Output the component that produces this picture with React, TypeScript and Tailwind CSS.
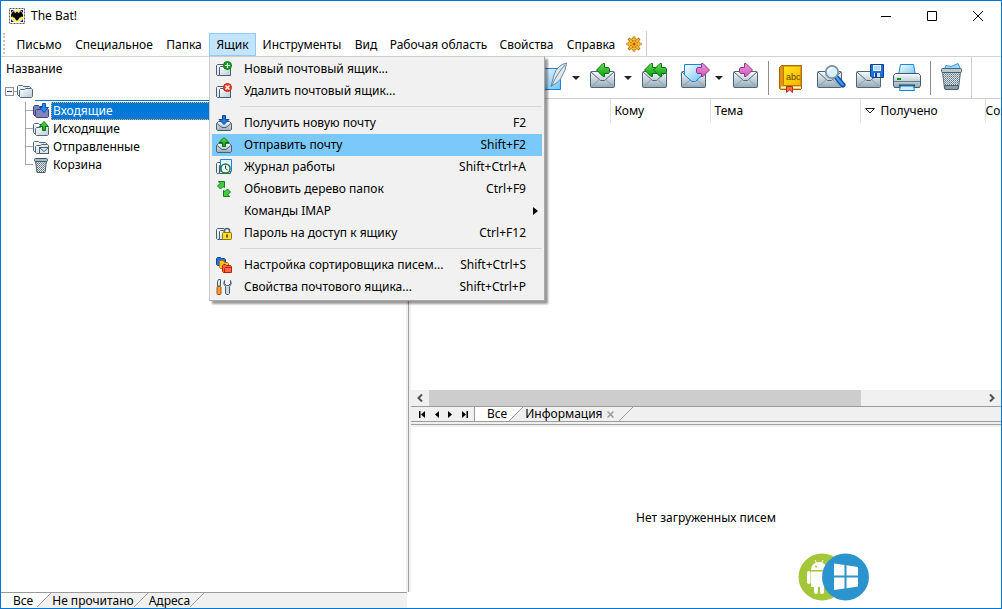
import type { ReactNode } from 'react';

const menus = [
  { label: 'Письмо', width: 'w-[60px]' },
  { label: 'Специальное', width: 'w-[90px]' },
  { label: 'Папка', width: 'w-[50px]' },
  { label: 'Ящик', width: 'w-[47px]', open: true },
  { label: 'Инструменты', width: 'w-[92px]' },
  { label: 'Вид', width: 'w-[36px]' },
  { label: 'Рабочая область', width: 'w-[109px]' },
  { label: 'Свойства', width: 'w-[67px]' },
  { label: 'Справка', width: 'w-[62px]' },
];

/* Gradients shared by every icon */
const Defs = () => (
  <svg width="0" height="0" className="absolute" aria-hidden="true">
    <defs>
      <linearGradient id="steel" x1="0" y1="0" x2="0" y2="1">
        <stop offset="0" stopColor="#f8fbfd" />
        <stop offset="1" stopColor="#94a9b7" />
      </linearGradient>
      <linearGradient id="paper" x1="0" y1="0" x2="1" y2="1">
        <stop offset="0" stopColor="#ffffff" />
        <stop offset="1" stopColor="#b9cad6" />
      </linearGradient>
      <linearGradient id="green" x1="0" y1="0" x2="0" y2="1">
        <stop offset="0" stopColor="#5fe04e" />
        <stop offset="1" stopColor="#0f9a17" />
      </linearGradient>
      <linearGradient id="pink" x1="0" y1="0" x2="0" y2="1">
        <stop offset="0" stopColor="#f08fdc" />
        <stop offset="1" stopColor="#c95fba" />
      </linearGradient>
      <linearGradient id="sky" x1="0" y1="0" x2="1" y2="1">
        <stop offset="0" stopColor="#ffffff" />
        <stop offset="1" stopColor="#6cc3fa" />
      </linearGradient>
      <linearGradient id="gold" x1="0" y1="0" x2="1" y2="1">
        <stop offset="0" stopColor="#ffe81c" />
        <stop offset="1" stopColor="#f5b400" />
      </linearGradient>
      <pattern id="mesh" width="2" height="2" patternUnits="userSpaceOnUse">
        <rect width="2" height="2" fill="#dfe6ea" />
        <rect width="1" height="1" fill="#5d6f7b" />
        <rect x="1" y="1" width="1" height="1" fill="#8496a1" />
      </pattern>
    </defs>
  </svg>
);

const Icon16 = ({ children }: { children?: ReactNode }) => (
  <svg width="16" height="16" viewBox="0 0 16 16" className="shrink-0" aria-hidden="true">
    {children}
  </svg>
);

const Icon32 = ({ children }: { children: ReactNode }) => (
  <svg width="32" height="32" viewBox="0 0 32 32" className="shrink-0" aria-hidden="true">
    {children}
  </svg>
);

const FolderShape = ({ fill = 'url(#paper)', stroke = '#4f6a7a' }: { fill?: string; stroke?: string }) => (
  <g fill={fill} stroke={stroke} strokeLinejoin="round">
    <path d="M2.5 13.5 L0.5 11.5 V3.5 L1.5 2.5 H5.5 L6.5 3.5 H12.5 L13.5 4.5 V6" />
    <path d="M2.5 13.5 V7.5 L3.5 6.5 H7.5 L8.5 5.5 H14.5 L15.5 6.5 V13.5 L14.5 14.5 H3.5 Z" />
  </g>
);

const FolderIcon = () => (
  <Icon16>
    <FolderShape />
  </Icon16>
);

const BoxShape = () => (
  <g fill="url(#paper)" stroke="#46606f" strokeLinejoin="round">
    <path d="M3.5 14.5 H1.5 L0.5 13.5 V4.5 L1.5 3.5 H8" />
    <path d="M3.5 14.5 V6.5 L4.5 5.5 H7.5 L8.5 7.5 H14.5 V14.5 Z" />
  </g>
);

const SmallEnvelope = () => (
  <g stroke="#46606f" strokeLinejoin="round">
    <path d="M2.5 6.5 H13.5 L15.5 8.5 V14.5 L14.5 15.5 H1.5 L0.5 14.5 V8.5 Z" fill="url(#steel)" />
    <path d="M1 8.5 L6 12.5 H10 L15 8.5" fill="none" />
  </g>
);

const NewBoxIcon = () => (
  <Icon16>
    <BoxShape />
    <circle cx="11.5" cy="4.5" r="4" fill="#19a825" stroke="#087a12" />
    <path d="M9 4.5 H14 M11.5 2 V7" stroke="#fff" />
  </Icon16>
);

const DeleteBoxIcon = () => (
  <Icon16>
    <BoxShape />
    <circle cx="11.5" cy="4.5" r="4" fill="#f0452a" stroke="#c21e0c" />
    <path d="M9.5 2.5 L13.5 6.5 M13.5 2.5 L9.5 6.5" stroke="#fff" strokeWidth="1.3" />
  </Icon16>
);

const ReceiveIcon = () => (
  <Icon16>
    <SmallEnvelope />
    <path d="M6.5 0.5 H9.5 V4.5 H13 L8 9.5 L3 4.5 H6.5 Z" fill="#2478df" stroke="#0b3f9c" />
  </Icon16>
);

const SendIcon = () => (
  <Icon16>
    <SmallEnvelope />
    <path d="M8 0.5 L13 5.5 H9.5 V9.5 H6.5 V5.5 H3 Z" fill="url(#green)" stroke="#087312" />
  </Icon16>
);

const LogIcon = () => (
  <Icon16>
    <BoxShape />
    <path d="M4.5 0.5 H15.5 V12.5 H4.5 Z" fill="#e6f5fe" stroke="#1686df" />
    <circle cx="9.5" cy="9.5" r="4.6" fill="#effbea" stroke="#247a45" strokeWidth="1.5" />
    <path d="M9.5 6.5 V9.5 L11.5 11" fill="none" stroke="#193c4c" />
  </Icon16>
);

const RefreshIcon = () => (
  <Icon16>
    <g fill="#3fcf3a" stroke="#0a8216" strokeLinejoin="round">
      <path d="M2.5 0.5 H8.5 V6.5 L7 5.5 L4.5 8 L1.5 5 L4 2.5 Z" />
      <path d="M13.5 15.5 H7.5 V9.5 L9 10.5 L11.5 8 L14.5 11 L12 13.5 Z" />
    </g>
  </Icon16>
);

const PasswordIcon = () => (
  <Icon16>
    <BoxShape />
    <path d="M8.5 9 V6 Q8.5 3.5 11 3.5 Q13.5 3.5 13.5 6 V9" fill="none" stroke="#546a76" strokeWidth="1.6" />
    <rect x="6.5" y="7.5" width="9" height="7" rx="1" fill="#ffe02a" stroke="#8a7312" />
    <path d="M11 9.5 V12.5" stroke="#5b4800" strokeWidth="1.8" />
  </Icon16>
);

const SorterIcon = () => (
  <Icon16>
    <g strokeLinejoin="round">
      <path d="M1.5 8.5 L0.5 7.5 V1.5 L1.5 0.5 H4.5 L5.5 1.5 H8.5 L9.5 2.5 V8.5 Z" fill="#1e74d4" stroke="#0c4598" />
      <path d="M4.5 11.5 L3.5 10.5 V4.5 L4.5 3.5 H7.5 L8.5 5.5 H11.5 L12.5 6.5 V11.5 Z" fill="#ffc21c" stroke="#b57400" />
      <path d="M7.5 15.5 L6.5 14.5 V8.5 L7.5 7.5 H9.5 L10.5 8.5 H14.5 L15.5 9.5 V15.5 Z" fill="#ff6742" stroke="#b91e08" />
      <path d="M8.5 15 V11.5 L9.5 10.5 H15" fill="none" stroke="#b91e08" />
    </g>
  </Icon16>
);

const ToolsIcon = () => (
  <Icon16>
    <path d="M1.5 2.5 L2.5 0.5 H4.5 V7 H1.5 Z" fill="#dce6ec" stroke="#415d6d" />
    <rect x="1" y="7.5" width="4" height="8" rx="1" fill="#f59a3a" stroke="#a9570f" />
    <path
      d="M8.5 1.5 V4.5 L10.5 6.5 H12.5 L14.5 4.5 V1.5 Q16.5 5 13.5 7.5 V14.5 L12.5 15.5 H11 L9.5 14.5 V7.5 Q6.5 5 8.5 1.5 Z"
      fill="#c9d9e2"
      stroke="#415d6d"
    />
  </Icon16>
);

const InboxIcon = () => (
  <Icon16>
    <FolderShape fill="#8086bd" stroke="#3d4283" />
    <path d="M9.5 0.5 H12.5 V4.5 H15.5 L11 9.5 L6.5 4.5 H9.5 Z" fill="#2b8df0" stroke="#0b4bb0" />
  </Icon16>
);

const OutboxIcon = () => (
  <Icon16>
    <FolderShape />
    <path d="M11 0.5 L15.5 5.5 H12.5 V9.5 H9.5 V5.5 H6.5 Z" fill="url(#green)" stroke="#087312" />
  </Icon16>
);

const SentIcon = () => (
  <Icon16>
    <FolderShape />
    <rect x="6.5" y="8.5" width="9" height="6" fill="#dfe8ee" stroke="#46606f" />
    <path d="M7 9 L11 12.5 L15 9" fill="none" stroke="#46606f" />
  </Icon16>
);

const BinIcon = () => (
  <Icon16>
    <path d="M2.5 4 H13.5 L12 15.5 H4 Z" fill="url(#mesh)" stroke="#4c616e" />
    <rect x="1.5" y="1.5" width="13" height="3" rx="1" fill="#a9bac5" stroke="#3f5664" />
  </Icon16>
);

/* Toolbar pictures */
const Envelope = () => (
  <g stroke="#4d6676" strokeLinejoin="round">
    <rect x="3.5" y="9.5" width="24" height="16" rx="1" fill="url(#steel)" />
    <path d="M4 10 L13.5 18.5 H17.5 L27 10" fill="none" />
    <path d="M4 25 L12.5 17.5 M27 25 L18.5 17.5" fill="none" stroke="#8aa0ae" />
  </g>
);

const ComposeIcon = () => (
  <Icon32>
    <path d="M1.5 6.5 H25.5 V27.5 H1.5 Z" fill="url(#sky)" stroke="#0f84e2" />
    <path d="M31.5 1 Q22 3 19 13 L16 24 Q25 20 27 14 Q31 8 31.5 1 Z" fill="#dde8ef" stroke="#6e8798" />
    <path d="M30 3 Q23 10 16 25" fill="none" stroke="#6e8798" />
  </Icon32>
);

const ReplyIcon = () => (
  <Icon32>
    <Envelope />
    <path d="M9.5 8 L16 1.5 H17.5 V5.5 H21.5 L22.5 7 V10 L21.5 11.5 H17.5 V14.5 H16 Z" fill="url(#green)" stroke="#087312" />
  </Icon32>
);

const ReplyAllIcon = () => (
  <Icon32>
    <Envelope />
    <g fill="url(#green)" stroke="#087312">
      <path d="M5.5 8 L12 1.5 H13.5 V5.5 H18 V11.5 H13.5 V14.5 H12 Z" />
      <path d="M14.5 8 L21 1.5 H22.5 V5.5 H26.5 L27.5 7 V10 L26.5 11.5 H22.5 V14.5 H21 Z" />
    </g>
  </Icon32>
);

const ForwardIcon = () => (
  <Icon32>
    <Envelope />
    <path d="M6.5 2.5 H24.5 V13 L17.5 19.5 H14 L6.5 13 Z" fill="url(#sky)" stroke="#0f84e2" />
    <path d="M31.5 8 L25 1.5 H23.5 V5.5 H19.5 L18.5 7 V10 L19.5 11.5 H23.5 V14.5 H25 Z" fill="url(#pink)" stroke="#913586" />
  </Icon32>
);

const RedirectIcon = () => (
  <Icon32>
    <Envelope />
    <path d="M22.5 8 L16 1.5 H14.5 V5.5 H10.5 L9.5 7 V10 L10.5 11.5 H14.5 V14.5 H16 Z" fill="url(#pink)" stroke="#913586" />
  </Icon32>
);

const BookIcon = () => (
  <Icon32>
    <path d="M4.5 5.5 L6.5 3.5 H26.5 V26.5 L25.5 27.5 H5.5 L4.5 26.5 Z" fill="#e3960c" stroke="#a95e00" />
    <path d="M8.5 4 H26 V23.5 H8.5 Z" fill="url(#gold)" stroke="#bd7900" />
    <path d="M6 24.5 H26 V26.5 H6 Z" fill="#fff3c9" />
    <path d="M11.5 24.5 H17.5 V30.5 L14.5 28 L11.5 30.5 Z" fill="#f06a50" stroke="#bf2d18" />
    <text x="11" y="18" fontSize="9" fill="#6b4300" fontFamily="Liberation Sans, sans-serif">abc</text>
  </Icon32>
);

const SearchIcon = () => (
  <Icon32>
    <Envelope />
    <path d="M23 16 L29 23" stroke="#124da3" strokeWidth="5" strokeLinecap="round" />
    <path d="M23 16 L28.5 22.5" stroke="#3f9af0" strokeWidth="2.5" strokeLinecap="round" />
    <circle cx="18" cy="10" r="6.2" fill="#d8effc" stroke="#7b93a3" strokeWidth="1.8" />
    <path d="M14 10 Q14.5 6 18.5 6" fill="none" stroke="#fff" strokeWidth="1.5" />
  </Icon32>
);

const SaveIcon = () => (
  <Icon32>
    <Envelope />
    <path d="M17.5 2.5 H30.5 V15.5 H19 L17.5 14 Z" fill="#1f6fd6" stroke="#0b3f94" />
    <rect x="20" y="3" width="8" height="6" fill="#e3f3fe" />
    <path d="M21 5 H27 M21 7 H27" stroke="#88bdea" />
    <rect x="21" y="11" width="6" height="4" fill="#cfe2f5" />
    <rect x="22" y="11" width="2" height="4" fill="#0b3f94" />
  </Icon32>
);

const PrintIcon = () => (
  <Icon32>
    <path d="M8.5 2.5 H21.5 L23.5 13 H6.5 Z" fill="url(#sky)" stroke="#1686df" />
    <path d="M3.5 11.5 H26.5 L28.5 13.5 V23.5 L27.5 25.5 H2.5 L1.5 23.5 V13.5 Z" fill="url(#steel)" stroke="#435c6b" />
    <path d="M2 19.5 H28" stroke="#6b8290" />
    <rect x="5" y="16" width="4" height="2" fill="#118a22" />
    <path d="M7 23.5 H23" stroke="#2d424f" strokeWidth="2" />
    <path d="M8.5 24 H21.5 L22.5 28.5 H7.5 Z" fill="#d2edfd" stroke="#1686df" />
  </Icon32>
);

const TrashIcon = () => (
  <Icon32>
    <path d="M7 8 L9 3.5 L14 4.5 L21 1.5 L24 8 Z" fill="#9fd8fb" stroke="#2f95e2" />
    <path d="M5.5 10 H23.5 L21.5 26.5 H7.5 Z" fill="url(#mesh)" stroke="#566c79" />
    <rect x="4.5" y="6.5" width="20" height="4" rx="1" fill="#b9c8d1" stroke="#4a616f" />
    <path d="M7.5 23.5 H21.5 L21 27.5 H8 Z" fill="#8b9ea9" stroke="#4a616f" />
  </Icon32>
);

const BatIcon = () => (
  <Icon16>
    <rect x="0.5" y="0.5" width="15" height="15" fill="#fff" stroke="#555" strokeDasharray="2 1" />
    <path d="M2 2 H5 L2 5 Z M14 2 V5 L11 2 Z M2 14 V11 L5 14 Z M14 14 H11 L14 11 Z" fill="#1c2496" />
    <ellipse cx="8" cy="8" rx="6.5" ry="6" fill="#f6ef5c" />
    <path d="M5 3 Q5 5 7 5 V3.5 L8 4.5 L9 3.5 V5 Q11 5 11 3 Q14.5 5 14 9 Q12.5 8 11.5 9.5 Q10.5 9 10 10.5 L8 13 L6 10.5 Q5.5 9 4.5 9.5 Q3.5 8 2 9 Q1.5 5 5 3 Z" fill="#000" />
  </Icon16>
);

const WheelIcon = () => (
  <svg width="16" height="16" viewBox="0 0 16 16" aria-hidden="true">
    <g fill="none" stroke="#a85d00" strokeWidth="2.6">
      <path d="M8 0.5 V15.5 M0.5 8 H15.5 M2.5 2.5 L13.5 13.5 M13.5 2.5 L2.5 13.5" />
      <circle cx="8" cy="8" r="4.6" />
    </g>
    <g fill="none" stroke="#ffc02e" strokeWidth="1.4">
      <path d="M8 1 V15 M1 8 H15 M3 3 L13 13 M13 3 L3 13" />
      <circle cx="8" cy="8" r="4.6" />
    </g>
    <circle cx="8" cy="8" r="1.5" fill="#a85d00" />
  </svg>
);

const menuItems = [
  { icon: <NewBoxIcon />, label: 'Новый почтовый ящик...' },
  { icon: <DeleteBoxIcon />, label: 'Удалить почтовый ящик...' },
  { divider: true },
  { icon: <ReceiveIcon />, label: 'Получить новую почту', keys: 'F2' },
  { icon: <SendIcon />, label: 'Отправить почту', keys: 'Shift+F2', active: true },
  { icon: <LogIcon />, label: 'Журнал работы', keys: 'Shift+Ctrl+A' },
  { icon: <RefreshIcon />, label: 'Обновить дерево папок', keys: 'Ctrl+F9' },
  { icon: <Icon16 />, label: 'Команды IMAP', submenu: true },
  { icon: <PasswordIcon />, label: 'Пароль на доступ к ящику', keys: 'Ctrl+F12' },
  { divider: true },
  { icon: <SorterIcon />, label: 'Настройка сортировщика писем...', keys: 'Shift+Ctrl+S' },
  { icon: <ToolsIcon />, label: 'Свойства почтового ящика...', keys: 'Shift+Ctrl+P' },
];

const folders = [
  { icon: <InboxIcon />, label: 'Входящие', selected: true },
  { icon: <OutboxIcon />, label: 'Исходящие' },
  { icon: <SentIcon />, label: 'Отправленные' },
  { icon: <BinIcon />, label: 'Корзина' },
];

const tools = [
  { icon: <ComposeIcon />, name: 'Создать', dropdown: true },
  { icon: <ReplyIcon />, name: 'Ответить', dropdown: true },
  { icon: <ReplyAllIcon />, name: 'Ответить всем' },
  { icon: <ForwardIcon />, name: 'Переслать', dropdown: true },
  { icon: <RedirectIcon />, name: 'Перенаправить' },
  { separator: true },
  { icon: <BookIcon />, name: 'Адресная книга' },
  { icon: <SearchIcon />, name: 'Поиск' },
  { icon: <SaveIcon />, name: 'Сохранить' },
  { icon: <PrintIcon />, name: 'Печать' },
  { separator: true },
  { icon: <TrashIcon />, name: 'Удалить' },
];

const TitleBar = () => (
  <header className="flex h-[30px] shrink-0 items-center justify-between">
    <div className="flex items-center gap-[6px] pl-2">
      <BatIcon />
      <h1>The Bat!</h1>
    </div>
    <div className="flex h-full">
      <button aria-label="Свернуть" className="grid w-[46px] place-items-center">
        <svg width="10" height="10" stroke="#000"><path d="M0 5.5 H10" /></svg>
      </button>
      <button aria-label="Развернуть" className="grid w-[46px] place-items-center">
        <svg width="10" height="10" stroke="#000" fill="none"><path d="M0.5 0.5 H9.5 V9.5 H0.5 Z" /></svg>
      </button>
      <button aria-label="Закрыть" className="grid w-[46px] place-items-center">
        <svg width="10" height="10" stroke="#000"><path d="M0 0 L10 10 M10 0 L0 10" /></svg>
      </button>
    </div>
  </header>
);

const DropdownMenu = () => (
  <div className="absolute top-full left-0 z-10 w-[336px] border border-[#a8a8a8] border-t-[#cccccc] border-l-[#cccccc] bg-[#f1f1f1] px-0.5 pt-px pb-0.5 shadow-[3px_3px_2px_rgba(0,0,0,0.4)]">
    {menuItems.map((item, index) =>
      item.divider ? (
        <div key={index} className="h-2.5 pt-1 pl-7">
          <hr className="border-[#d7d7d7]" />
        </div>
      ) : (
        <button
          key={index}
          className={`flex h-[22px] w-full items-center pr-4 pl-1 text-left whitespace-nowrap ${item.active ? 'bg-[#7ac9fa]' : ''}`}
        >
          {item.icon}
          <span className="ml-3 flex-1">{item.label}</span>
          {item.keys && <span>{item.keys}</span>}
          {item.submenu && (
            <svg width="5" height="8" viewBox="0 0 5 8" className="-mr-3"><path d="M0 0 L5 4 L0 8 Z" /></svg>
          )}
        </button>
      )
    )}
  </div>
);

const MenuBar = () => (
  <nav className="flex h-[26px] shrink-0 items-stretch border-b border-[#d2d2d2]">
    <div className="my-0.5 mr-1 ml-0.5 w-0.5 border-l-2 border-dotted border-[#c4c4c4]" />
    {menus.map((menu) => (
      <div key={menu.label} className={`relative flex shrink-0 pt-0.5 ${menu.width}`}>
        <button className={`w-full border text-center whitespace-nowrap ${menu.open ? 'border-[#90cbf7] bg-[#c2e5fd]' : 'border-transparent'}`}>
          {menu.label}
        </button>
        {menu.open && <DropdownMenu />}
      </div>
    ))}
    <button aria-label="Настройка панели" className="grid w-[25px] shrink-0 place-items-center border-r border-[#cfcfcf]">
      <WheelIcon />
    </button>
  </nav>
);

/* Slanted edge between two bottom tabs */
const TabEdge = ({ left, right }: { left: string; right: string }) => (
  <svg width="14" height="14" viewBox="0 0 14 14" className="shrink-0" aria-hidden="true">
    <path d="M0 0 H14 L0 14 Z" fill={left} />
    <path d="M14 0 V14 H0 Z" fill={right} />
    <path d="M0 14 L14 0" stroke="#9b9b9b" />
  </svg>
);

const FolderPane = () => (
  <aside className="flex w-[41%] shrink-0 flex-col">
    <div className="flex flex-1">
      <div className="flex flex-1 flex-col">
        <h2 className="h-6 pl-[5px] leading-6">Название</h2>
        <div className="flex h-5 items-center">
          <button aria-label="Свернуть дерево" className="ml-1 h-[9px] w-[9px] shrink-0 border border-[#919191]">
            <svg width="7" height="7" stroke="#2a4bb0"><path d="M1 3.5 H6" /></svg>
          </button>
          <span className="w-[3px] shrink-0 border-t border-[#a8a8a8]" />
          <FolderIcon />
          <span className="ml-0.5 h-px flex-1 self-end bg-[#0078d7]" />
        </div>
        <ul className="pt-px">
          {folders.map((folder, index) => (
            <li key={folder.label} className="flex h-[18px] items-stretch">
              <span className="ml-6 flex w-2 shrink-0 flex-col">
                <span className="h-[9px] border-b border-l border-[#a8a8a8]" />
                {index < folders.length - 1 && <span className="flex-1 border-l border-[#a8a8a8]" />}
              </span>
              <span className="flex items-center">{folder.icon}</span>
              <span
                className={`ml-0.5 flex-1 border px-px leading-4 ${
                  folder.selected ? 'border-dotted border-[#ffb060] bg-[#0078d7] text-white' : 'border-transparent'
                }`}
              >
                {folder.label}
              </span>
            </li>
          ))}
        </ul>
      </div>
      <div className="w-[3px] border-r border-[#a0a0a0] bg-[#f0f0f0]" />
      <div className="w-0.5 bg-[#f0f0f0]" />
    </div>
    <div className="mr-1 flex h-4 shrink-0 border-t border-[#9b9b9b] bg-[#f0f0f0] leading-[14px]">
      <button className="bg-white pr-1 pl-3">Все</button>
      <TabEdge left="#ffffff" right="#f0f0f0" />
      <button className="pl-px">Не прочитано</button>
      <TabEdge left="#f0f0f0" right="#f0f0f0" />
      <button className="pl-px">Адреса</button>
      <TabEdge left="#f0f0f0" right="#f0f0f0" />
    </div>
  </aside>
);

const Toolbar = () => (
  <div className="flex h-[42px] shrink-0 border-b border-[#cfcfcf]">
    <div className="flex items-center gap-[3px] border-r border-[#cfcfcf] pl-[122px]">
      {tools.map((tool, index) =>
        tool.separator ? (
          <span key={index} className="mx-px h-[34px] w-px bg-[#8c8c8c]" />
        ) : (
          <div key={index} className="flex">
            <button aria-label={tool.name} className="grid h-9 w-9 place-items-center">
              {tool.icon}
            </button>
            {tool.dropdown && (
              <button aria-label={`${tool.name}: ещё`} className="grid w-[13px] place-items-center">
                <svg width="8" height="4"><path d="M0 0 H8 L4 4 Z" fill="#222" /></svg>
              </button>
            )}
          </div>
        )
      )}
    </div>
  </div>
);

const MessageList = () => (
  <div className="flex flex-1 flex-col">
    <div className="flex-1 overflow-hidden">
      <table className="w-[720px] table-fixed text-left">
        <thead>
          <tr className="h-6">
            <th className="w-[199px] border-r border-[#e2e2e2]" />
            <th className="w-[100px] border-r border-[#e2e2e2] px-1 font-normal">Кому</th>
            <th className="w-[150px] border-r border-[#e2e2e2] px-1 font-normal">Тема</th>
            <th className="w-[125px] border-r border-[#e2e2e2] px-1 font-normal">
              <span className="flex items-center gap-[6px]">
                <svg width="10" height="6" fill="none" stroke="#222"><path d="M0.5 0.5 H9.5 L5 5 Z" /></svg>
                Получено
              </span>
            </th>
            <th className="font-normal">Создано</th>
          </tr>
        </thead>
      </table>
    </div>
    <div className="flex h-4 shrink-0 bg-[#f0f0f0]">
      <button aria-label="Влево" className="grid w-[18px] place-items-center">
        <svg width="6" height="8" fill="none" stroke="#505050" strokeWidth="2"><path d="M5 0.5 L1.5 4 L5 7.5" /></svg>
      </button>
      <div className="flex-1">
        <div className="h-full w-[78%] bg-[#cdcdcd]" />
      </div>
      <button aria-label="Вправо" className="grid w-[18px] place-items-center">
        <svg width="6" height="8" fill="none" stroke="#505050" strokeWidth="2"><path d="M1 0.5 L4.5 4 L1 7.5" /></svg>
      </button>
    </div>
    <div className="flex h-4 shrink-0 border-y border-[#9b9b9b] bg-[#f0f0f0] leading-[14px]">
      <div className="flex items-center gap-[9px] border-r border-[#9b9b9b] pr-[6px] pl-2">
        <button aria-label="Первая"><svg width="7" height="7"><path d="M0 0 H1.5 V7 H0 Z M6 0 V7 L2 3.5 Z" /></svg></button>
        <button aria-label="Предыдущая"><svg width="4" height="7"><path d="M4 0 V7 L0 3.5 Z" /></svg></button>
        <button aria-label="Следующая"><svg width="4" height="7"><path d="M0 0 V7 L4 3.5 Z" /></svg></button>
        <button aria-label="Последняя"><svg width="7" height="7"><path d="M5.5 0 H7 V7 H5.5 Z M1 0 V7 L5 3.5 Z" /></svg></button>
      </div>
      <button className="bg-white pr-0.5 pl-3">Все</button>
      <TabEdge left="#ffffff" right="#f0f0f0" />
      <button className="pl-0.5">Информация</button>
      <button aria-label="Закрыть вкладку" className="grid w-4 place-items-center">
        <svg width="7" height="7" stroke="#999" strokeWidth="1.5"><path d="M0.5 0.5 L6.5 6.5 M6.5 0.5 L0.5 6.5" /></svg>
      </button>
      <TabEdge left="#f0f0f0" right="#f0f0f0" />
    </div>
    <div className="h-0.5 shrink-0 bg-[#f0f0f0]" />
    <div className="h-[3px] shrink-0 border-t border-[#a0a0a0] bg-[#f0f0f0]" />
  </div>
);

const PlatformBadge = () => (
  <svg width="72" height="48" viewBox="0 0 72 48" className="absolute right-[131px] bottom-[7px]" aria-hidden="true">
    <circle cx="24" cy="24" r="23.5" fill="#a4c639" />
    <g fill="#fff">
      <path d="M13 17 A8 8 0 0 1 29 17 Z" />
      <path d="M13 18.5 H30 V34 H13 Z" />
      <rect x="9" y="18" width="3.5" height="13" rx="1.7" />
      <rect x="16" y="32" width="4" height="9" rx="2" />
      <rect x="22" y="32" width="4" height="9" rx="2" />
    </g>
    <path d="M17 7 L19 11 M25 7 L23 11" stroke="#fff" />
    <circle cx="18" cy="13.5" r="1" fill="#a4c639" />
    <circle cx="47.5" cy="24" r="23.5" fill="#2b94cf" />
    <path
      d="M36 10.5 L46.5 12 V22.5 H36 Z M48.5 12.3 L60 14 V22.5 H48.5 Z M36 24.5 H46.5 V35.5 L36 37 Z M48.5 24.5 H60 V33.5 L48.5 35.2 Z"
      fill="#fff"
    />
  </svg>
);

const PreviewPane = () => (
  <section className="relative grid h-[181px] shrink-0 place-items-center">
    <p>Нет загруженных писем</p>
    <PlatformBadge />
  </section>
);

const App = () => (
  <div className="flex min-h-screen flex-col overflow-hidden border border-[#0078d7] bg-white font-['Noto_Sans','Open_Sans',sans-serif] text-[12px] leading-4 text-black">
    <Defs />
    <TitleBar />
    <MenuBar />
    <div className="flex flex-1">
      <FolderPane />
      <main className="flex min-w-0 flex-1 flex-col">
        <Toolbar />
        <MessageList />
        <PreviewPane />
      </main>
    </div>
  </div>
);

export default App;
